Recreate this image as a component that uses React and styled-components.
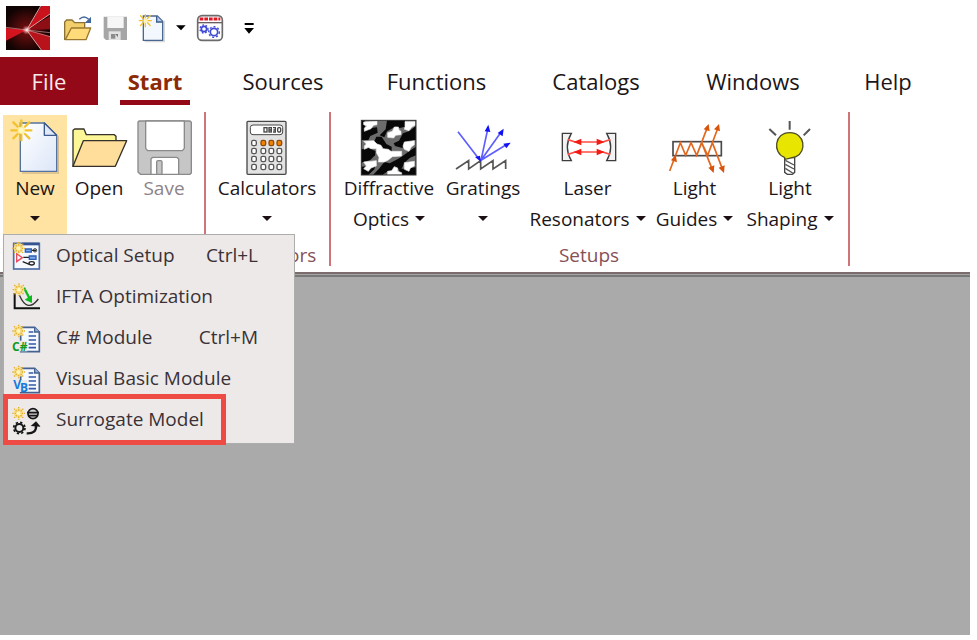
import React from "react";
import styled, { createGlobalStyle, css } from "styled-components";

const Global = createGlobalStyle`
  * { box-sizing: border-box; }
  body { margin: 0; background: #fff; }
  button { font: inherit; color: inherit; background: none; border: 0; padding: 0; margin: 0; }
`;

const Page = styled.div`
  display: flex;
  flex-direction: column;
  min-height: 100vh;
  padding: 0 7px 5px 0;
  font-family: "Open Sans", "Noto Sans", sans-serif;
  font-size: 19px;
  color: #1c1518;
`;

const QuickAccess = styled.header`
  display: flex;
  align-items: center;
  gap: 8px;
  height: 57px;
  padding: 0 0 1px 6px;
`;

const Logo = styled.svg`
  width: 44px;
  height: 44px;
  margin-right: 6px;
`;

const QuickButton = styled.button`
  display: flex;
  width: ${(p) => p.$w || 28}px;
  height: 28px;
  margin-left: ${(p) => (p.$apart ? 8 : 0)}px;
`;

const Glyph = styled.svg`
  display: block;
  flex: none;
  width: 100%;
  height: 100%;
  overflow: visible;
`;

const TabBar = styled.nav`
  display: flex;
  height: 48px;
  font-size: 22px;
`;

const Tab = styled.button`
  display: flex;
  justify-content: center;
  width: ${(p) => p.$w}px;
  line-height: 48px;
  white-space: nowrap;
  ${(p) => p.$file && css`background: #930918; color: #f6e9ea;`}
  ${(p) => p.$active && css`color: #8c2a06; font-weight: 700;`}
`;

const TabText = styled.span`
  height: 48px;
  padding: 0 8px;
  ${(p) => p.$active && css`border-bottom: 5px solid #930918;`}
`;

const Ribbon = styled.section`
  display: flex;
  padding: 7px 0 6px;
  border-bottom: 2px solid #7b6d6d;
`;

const Group = styled.div`
  display: flex;
  flex-direction: column;
  justify-content: space-between;
  min-height: 154px;
  padding: 3px ${(p) => p.$right || 0}px 0 ${(p) => p.$left || 0}px;
  border-right: 2px solid #cf7479;
`;

const GroupButtons = styled.div`
  display: flex;
`;

const GroupLabel = styled.div`
  text-align: center;
  line-height: 22px;
  color: #875055;
`;

const Anchor = styled.div`
  position: relative;
`;

const BigButton = styled.button`
  display: flex;
  flex-direction: column;
  align-items: center;
  justify-content: flex-start;
  width: ${(p) => p.$w}px;
  padding-top: 4px;
  line-height: 30px;
  white-space: nowrap;
  ${(p) => p.$open && css`background: #ffe3a2; height: 120px;`}
  &:disabled { color: #8e8388; }
`;

const BigIcon = styled.span`
  display: block;
  width: 56px;
  height: 53px;
`;

const IconSvg = styled.svg`
  display: block;
  width: 56px;
  height: 56px;
  overflow: visible;
`;

const Line = styled.span`
  display: flex;
  align-items: center;
  justify-content: center;
  gap: 6px;
  height: 31px;
`;

const Caret = styled.span`
  border: 5px solid transparent;
  border-top-color: #1c1014;
  border-bottom: 0;
`;

const Menu = styled.div`
  position: absolute;
  z-index: 2;
  top: 119px;
  left: 0;
  width: 292px;
  padding-bottom: 3px;
  background: #ede9e9;
  border: 1px solid #adadad;
`;

const MenuItem = styled.button`
  position: relative;
  display: flex;
  align-items: center;
  width: 100%;
  height: 41px;
  padding: 0 36px 2px 8px;
  text-align: left;
  white-space: nowrap;
  color: #3a3236;
`;

const MenuIcon = styled.svg`
  width: 28px;
  height: 28px;
  margin-right: 16px;
  overflow: visible;
`;

const Shortcut = styled.span`
  margin-left: auto;
`;

const Highlight = styled.span`
  position: absolute;
  top: -5px;
  left: -1px;
  width: 223px;
  height: 51px;
  border: 5px solid #ed4b44;
`;

const Workspace = styled.main`
  flex: 1;
  background: #aaa;
  border-top: 1px solid #a4a4a4;
  box-shadow: inset 0 2px #777;
`;

const Spark = ({ x, y, s = 1, color = "#f3c32e" }) => (
  <g transform={`translate(${x} ${y}) scale(${s})`} stroke={color} strokeWidth="7" strokeLinecap="round">
    <path d="M0-30V-13M0 13V30M-30 0H-13M13 0H30M-24-24L-11-11M24-24L11-11M-24 24L-11 11M24 24L11 11" />
    <circle r="10" fill="#fff7c2" stroke="#ffe98a" strokeWidth="3" />
  </g>
);

const SmallSpark = ({ x, y }) => (
  <g transform={`translate(${x} ${y})`}>
    <circle r="15" fill="#f8df8c" />
    <path d="M0-19V19M-19 0H19M-14-14L14 14M14-14L-14 14" stroke="#e2ad2b" strokeWidth="4" strokeDasharray="4 3" />
    <circle r="6" fill="#fff6c0" />
  </g>
);

const NewIcon = () => (
  <IconSvg viewBox="21 42 168 168" fill="none">
    <defs>
      <linearGradient id="paper" x1="0" y1="0" x2="1" y2="1">
        <stop offset="0" stopColor="#fff" />
        <stop offset="1" stopColor="#dce6f8" />
      </linearGradient>
    </defs>
    <path d="M66 204H175V94" stroke="#d5bd8b" strokeWidth="4" />
    <path d="M61 54H133L170 91V199H61Z" fill="url(#paper)" stroke="#54719f" strokeWidth="4" />
    <path d="M133 54V91H170Z" fill="#dfe9fa" stroke="#3c5a8c" strokeWidth="4" strokeLinejoin="round" />
    <Spark x={64} y={76} />
  </IconSvg>
);

const OpenIcon = () => (
  <IconSvg viewBox="213 42 168 168" stroke="#34322a" strokeWidth="4" strokeLinejoin="round">
    <path d="M219 184V76L224 72H252L259 89H343L348 94V108L300 170Z" fill="#fdf697" />
    <path d="M219 184L250 107H380L346 184Z" fill="#ffdd9b" />
  </IconSvg>
);

const SaveIcon = () => (
  <IconSvg viewBox="408 42 168 168" stroke="#8a8a8a" strokeWidth="4" strokeLinejoin="round">
    <path d="M417 48H570L574 52V204L570 208H421L414 201V51Z" fill="#c6c6c6" />
    <path d="M437 48H553V130L547 137H443L437 130Z" fill="#fff" />
    <path d="M453 208V162L458 157H530L536 162V208Z" fill="#fff" />
    <rect x="470" y="167" width="16" height="41" rx="4" fill="#c6c6c6" />
  </IconSvg>
);

const CalculatorIcon = () => (
  <IconSvg viewBox="103 42 168 168" stroke="#484848" strokeWidth="4">
    <rect x="127" y="49" width="117" height="159" rx="3" fill="#e2e2e2" />
    <rect x="137" y="60" width="97" height="29" rx="8" fill="#fff" strokeWidth="3" />
    <g fill="none" strokeWidth="4">
      <rect x="178" y="68" width="9" height="13" />
      <rect x="193" y="68" width="7" height="13" />
      <path d="M193 75H200M205 68H212V81H205M206 75H212" />
      <rect x="219" y="68" width="9" height="13" rx="3" />
    </g>
    {[114, 138, 162, 186].map((y, r) =>
      [148, 176, 200, 224].map((x, c) => (
        <rect key={x + "-" + y} x={x - 7} y={y - 8} width="14" height="16" rx="5" strokeWidth="4"
          fill={r === 0 && c > 0 ? "#ef8200" : "#fff"} stroke={r === 0 && c > 0 ? "#8a4a10" : "#555"} />
      ))
    )}
  </IconSvg>
);

const DiffractiveIcon = () => (
  <IconSvg viewBox="6 3 168 168">
    <rect x="7" y="7" width="164" height="164" fill="#6c6c6c" />
    <g fill="#080808">
      <path d="M7 7H18V32L54 28L56 44L34 54L28 66H7Z" />
      <path d="M84 7H138V26L122 30L108 26L84 40L76 58L62 52L80 34Z" />
      <path d="M52 56H68L82 78L98 86V102H86L62 96L44 74Z" />
      <path d="M171 24V66L140 72L130 90L108 84L104 76L120 68L132 46L150 40Z" />
      <path d="M7 94L30 90L50 100L48 112L34 126L7 134Z" />
      <path d="M171 86V112L152 120L136 134L128 152L86 160L70 171H42L60 152L76 132L92 136L118 122L134 112L150 100Z" />
      <path d="M7 146L50 142L46 154L28 171H7Z" />
      <path d="M120 152H136L171 148V171H122Z" />
    </g>
    <g fill="#fff" stroke="#e8e8e8" strokeWidth="2" strokeLinejoin="round">
      <path d="M14 12L54 10V20L44 22L36 32L16 40V30L24 24L14 20Z" />
      <path d="M106 27H118L120 36L126 40V50L110 52L104 60L86 58V44L100 40Z" />
      <path d="M138 11H168V22L158 28L150 38L136 34L138 26Z" />
      <path d="M14 70L44 68L54 78L66 82L72 92L88 94L96 100H128V114L100 116L88 126L76 132H58L60 118L52 104V92H36L28 88L16 94V84L22 78Z" />
      <path d="M136 72L166 68V80L156 88L150 100L136 94L132 84Z" />
      <path d="M14 132L52 128V144L36 150L28 160L14 152L22 144Z" />
      <path d="M136 134L166 130V144L154 150L150 160L136 154Z" />
      <path d="M106 146L116 150V160L128 164V170H86V160L98 158Z" />
    </g>
    <rect x="7" y="7" width="164" height="164" fill="none" stroke="#333" strokeWidth="3" />
  </IconSvg>
);

const GratingsIcon = () => (
  <IconSvg viewBox="63 42 168 168" fill="none">
    <path d="M66 192L104 167V192L140 167V192L177 167V192L215 167V192" stroke="#555" strokeWidth="5" />
    <path d="M72 80L139 167M141 166L161 73M141 166L201 82M141 166L219 118" stroke="#5e5eff" strokeWidth="5" />
    <g fill="#1212f0">
      <path d="M141 170L123 156L138 152Z" />
      <path d="M163 59L169 81L152 79Z" />
      <path d="M209 71L206 94L191 84Z" />
      <path d="M230 113L217 130L208 116Z" />
    </g>
  </IconSvg>
);

const LaserIcon = () => (
  <IconSvg viewBox="376 42 168 168" fill="none" strokeWidth="4">
    <path d="M410 85H383V167H410Q386 126 410 85Z" fill="#f2f2f2" stroke="#3d3d3d" />
    <path d="M516 85H543V167H516Q540 126 516 85Z" fill="#f2f2f2" stroke="#3d3d3d" />
    <path d="M399 104L422 111H504L527 104M399 148L422 141H504L527 148" stroke="#ff4c44" strokeWidth="5" />
    <g fill="#f21c14">
      <path d="M416 111L440 101V121ZM510 111L486 101V121ZM416 141L440 131V151ZM510 141L486 131V151Z" />
    </g>
  </IconSvg>
);

const GuidesIcon = () => (
  <IconSvg viewBox="68 42 168 168" fill="none">
    <rect x="86" y="110" width="145" height="42" stroke="#4a4a4a" strokeWidth="5" />
    <path d="M76 198L108 113L124 151L140 113L157 151L190 65M157 151L172 113M172 113L204 194M172 113L190 151L222 65M204 113L235 194" stroke="#e3681e" strokeWidth="5" />
    <g fill="#d9540b">
      <path d="M94 149L98 172L80 166Z" />
      <path d="M193 57L196 79L178 73ZM224 57L227 79L209 73Z" />
      <path d="M208 204L210 181L192 188ZM239 204L241 181L223 188Z" />
    </g>
  </IconSvg>
);

const BulbIcon = () => (
  <IconSvg viewBox="354 42 168 168" fill="none">
    <path d="M437 48V74M376 72L396 91M498 72L479 91" stroke="#555" strokeWidth="6" />
    <path d="M422 158V202L430 208H445L452 202V158Z" fill="#fff" stroke="#454545" strokeWidth="4" />
    <path d="M424 166L450 180M424 178L450 192M424 190L446 204" stroke="#555" strokeWidth="4" />
    <path d="M424 163L421 157C385 143 391 83 437 83C483 83 489 139 456 155Z" fill="#e8e600" stroke="#4d4d27" strokeWidth="4" />
  </IconSvg>
);

const DocLines = ({ x, y }) => (
  <g>
    <path d={`M${x} ${y}H${x + 42}L${x + 56} ${y + 14}V${y + 73}H${x}Z`} fill="#f4f8ff" stroke="#44618f" strokeWidth="5" />
    <path d={`M${x + 42} ${y}V${y + 14}H${x + 56}`} fill="#9db4d8" stroke="#44618f" strokeWidth="4" />
    <path d={`M${x + 24} ${y + 14}H${x + 38}M${x + 24} ${y + 26}H${x + 46}M${x + 24} ${y + 38}H${x + 46}M${x + 24} ${y + 50}H${x + 46}M${x + 24} ${y + 61}H${x + 46}`} stroke="#3558a5" strokeWidth="5" />
  </g>
);

const CodeText = styled.text`
  font-family: "Open Sans", sans-serif;
  font-weight: 700;
  font-size: 36px;
`;

const setupIcon = (
  <MenuIcon viewBox="36 36 84 84" fill="none">
    <rect x="41" y="43" width="77" height="77" fill="#f5f9ff" stroke="#4d6ea6" strokeWidth="5" />
    <path d="M66 45H118" stroke="#35548f" strokeWidth="8" />
    <path d="M50 74V98L67 86Z" stroke="#ee4a5a" strokeWidth="4" />
    <path d="M70 85H88M94 64H108M68 98L88 106" stroke="#222" strokeWidth="4" />
    <path d="M76 60H94V69H76ZM88 81H108V91H88Z" fill="#7ca9ed" stroke="#2e5eb0" strokeWidth="4" />
    <circle cx="105" cy="64" r="5" stroke="#333" strokeWidth="3" />
    <ellipse cx="95" cy="103" rx="8" ry="5" stroke="#222" strokeWidth="4" />
    <SmallSpark x={56} y={58} />
  </MenuIcon>
);

const iftaIcon = (
  <MenuIcon viewBox="36 159 84 84" fill="none">
    <path d="M44 192V238H120" stroke="#111" strokeWidth="6" />
    <path d="M58 198Q82 254 115 210" stroke="#333" strokeWidth="4" />
    <path d="M72 176L88 207" stroke="#0aba1e" strokeWidth="7" />
    <path d="M96 222L74 212L96 198Z" fill="#0aba1e" />
    <SmallSpark x={57} y={182} />
  </MenuIcon>
);

const csharpIcon = (
  <MenuIcon viewBox="36 11 84 84" fill="none">
    <DocLines x={62} y={24} />
    <rect x="38" y="64" width="44" height="32" fill="#ede9e9" />
    <CodeText x="36" y="94" fill="#109a1c">C#</CodeText>
    <SmallSpark x={56} y={35} />
  </MenuIcon>
);

const basicIcon = (
  <MenuIcon viewBox="36 134 84 84" fill="none">
    <DocLines x={62} y={147} />
    <rect x="40" y="182" width="42" height="36" fill="#ede9e9" />
    <CodeText x="40" y="208" fill="#1879dd">V</CodeText>
    <CodeText x="60" y="219" fill="#1879dd">B</CodeText>
    <SmallSpark x={56} y={158} />
  </MenuIcon>
);

const surrogateIcon = (
  <MenuIcon viewBox="36 257 84 84" fill="none" stroke="#171717">
    <circle cx="99" cy="283" r="15" strokeWidth="5" fill="#d9d6d6" />
    <path d="M81 280H117M86 289H112" strokeWidth="5" />
    <circle cx="58" cy="326" r="17" strokeWidth="5" strokeDasharray="7 6.4" />
    <circle cx="58" cy="326" r="12" strokeWidth="6" />
    <path d="M80 342Q110 344 108 318" strokeWidth="7" />
    <path d="M92 320L108 306L122 322Z" fill="#171717" stroke="none" />
    <g stroke="none"><SmallSpark x={56} y={282} /></g>
  </MenuIcon>
);

const menu = [
  { icon: setupIcon, label: "Optical Setup", keys: "Ctrl+L" },
  { icon: iftaIcon, label: "IFTA Optimization" },
  { icon: csharpIcon, label: "C# Module", keys: "Ctrl+M" },
  { icon: basicIcon, label: "Visual Basic Module" },
  { icon: surrogateIcon, label: "Surrogate Model", marked: true },
];

const tabs = [
  { label: "File", w: 98, file: true },
  { label: "Start", w: 114, active: true },
  { label: "Sources", w: 142 },
  { label: "Functions", w: 165 },
  { label: "Catalogs", w: 154 },
  { label: "Windows", w: 160 },
  { label: "Help", w: 110 },
];

const setups = [
  { Icon: DiffractiveIcon, w: 102, first: "Diffractive", second: "Optics" },
  { Icon: GratingsIcon, w: 86, first: "Gratings" },
  { Icon: LaserIcon, w: 123, first: "Laser", second: "Resonators" },
  { Icon: GuidesIcon, w: 91, first: "Light", second: "Guides" },
  { Icon: BulbIcon, w: 100, first: "Light", second: "Shaping" },
];

const Command = ({ Icon, w, first, second, drop = true, ...rest }) => (
  <BigButton $w={w} {...rest}>
    <BigIcon><Icon /></BigIcon>
    <Line>{first}</Line>
    {drop && <Line>{second}<Caret /></Line>}
  </BigButton>
);

export default function App() {
  return (
    <Page>
      <Global />
      <QuickAccess>
        <Logo viewBox="18 18 132 132" fill="none">
          <defs>
            <radialGradient id="ember" gradientUnits="userSpaceOnUse" cx="80" cy="90" r="70">
              <stop offset="0" stopColor="#7a1010" />
              <stop offset="1" stopColor="#100303" />
            </radialGradient>
            <radialGradient id="flare">
              <stop offset="0" stopColor="#fff" />
              <stop offset="1" stopColor="#ff9a9a" stopOpacity="0" />
            </radialGradient>
          </defs>
          <rect x="18" y="18" width="132" height="132" fill="url(#ember)" />
          <path d="M80 90L124 18H150V42Z" fill="#c9121b" />
          <path d="M80 90L150 48V88Z" fill="#8d0f15" />
          <path d="M80 90L18 84V122Z" fill="#d3141e" />
          <path d="M80 90L150 108V150H124Z" fill="#b8121b" />
          <path d="M80 90L122 18M80 90L150 42M80 90L124 150" stroke="#dba0a1" strokeWidth="3" />
          <path d="M80 90L150 98M80 90L150 110M80 90L18 82" stroke="#c99a9a" strokeWidth="2" />
          <circle cx="80" cy="90" r="14" fill="url(#flare)" />
        </Logo>
        <QuickButton aria-label="Open">
          <Glyph viewBox="192 42 84 84" fill="none">
            <path d="M194 118V66L200 60H216L224 68H254V84L230 118Z" fill="#f3cf6b" stroke="#8d7134" strokeWidth="4" />
            <path d="M196 119L214 84H272L258 119Z" fill="#ffdc79" stroke="#9a7832" strokeWidth="4" strokeLinejoin="round" />
            <path d="M238 58Q252 44 266 58" stroke="#42679c" strokeWidth="4" />
            <path d="M273 50V69H254Z" fill="#42679c" />
          </Glyph>
        </QuickButton>
        <QuickButton aria-label="Save">
          <Glyph viewBox="300 42 84 84">
            <path d="M311 50H381V120H318L311 113Z" fill="#a6a6a6" />
            <path d="M322 50H371V84H322Z" fill="#f6f6f6" />
            <path d="M326 94H362V120H326Z" fill="#e2e2e2" />
            <path d="M333 102H346V116H333Z" fill="#8c8c8c" />
            <path d="M346 102H354V112Z" fill="#777" />
          </Glyph>
        </QuickButton>
        <QuickButton aria-label="New">
          <Glyph viewBox="408 42 84 84" fill="none">
            <path d="M434 125H493V62" stroke="#d8d8d8" strokeWidth="4" />
            <path d="M430 48H472L488 64V121H430Z" fill="#f3f8ff" stroke="#4a6693" strokeWidth="4" />
            <path d="M470 48V66H488" fill="#b7cbea" stroke="#3d5b8d" strokeWidth="4" />
            <Spark x={436} y={62} s={0.6} />
          </Glyph>
        </QuickButton>
        <QuickButton $w={16} aria-label="More new items">
          <Glyph viewBox="516 42 48 84"><path d="M528 76H557L543 91Z" /></Glyph>
        </QuickButton>
        <QuickButton aria-label="Scheduled calculations">
          <Glyph viewBox="588 42 84 84" fill="none">
            <rect x="593" y="47" width="74" height="74" rx="13" fill="#fff" stroke="#6b6b6b" strokeWidth="5" />
            <path d="M599 57H661" stroke="#e01824" strokeWidth="9" strokeDasharray="11 3" />
            <path d="M594 68H666" stroke="#6a5f5f" strokeWidth="4" />
            <circle cx="612" cy="87" r="8" stroke="#3f4ad2" strokeWidth="5" />
            <circle cx="612" cy="87" r="12" stroke="#3f4ad2" strokeWidth="4" strokeDasharray="5 5" />
            <circle cx="642" cy="96" r="11" stroke="#3f4ad2" strokeWidth="5" />
            <circle cx="642" cy="96" r="16" stroke="#3f4ad2" strokeWidth="4" strokeDasharray="6 6" />
          </Glyph>
        </QuickButton>
        <QuickButton $w={18} $apart aria-label="Customize toolbar">
          <Glyph viewBox="720 42 54 84"><path d="M734 69H761V75H734ZM733 84H762L747 101Z" /></Glyph>
        </QuickButton>
      </QuickAccess>

      <TabBar>
        {tabs.map((t) => (
          <Tab key={t.label} $w={t.w} $file={t.file} $active={t.active}>
            <TabText $active={t.active}>{t.label}</TabText>
          </Tab>
        ))}
      </TabBar>

      <Ribbon>
        <Group $left={3} $right={7}>
          <GroupButtons>
            <Anchor>
              <Command Icon={NewIcon} w={64} first="New" $open aria-haspopup="menu" aria-expanded="true" />
              <Menu role="menu">
                {menu.map((m) => (
                  <MenuItem key={m.label} role="menuitem">
                    {m.icon}
                    {m.label}
                    {m.keys && <Shortcut>{m.keys}</Shortcut>}
                    {m.marked && <Highlight />}
                  </MenuItem>
                ))}
              </Menu>
            </Anchor>
            <Command Icon={OpenIcon} w={64} first="Open" drop={false} />
            <Command Icon={SaveIcon} w={66} first="Save" drop={false} disabled />
          </GroupButtons>
        </Group>
        <Group $left={7} $right={8}>
          <GroupButtons>
            <Command Icon={CalculatorIcon} w={108} first="Calculators" />
          </GroupButtons>
          <GroupLabel>Calculators</GroupLabel>
        </Group>
        <Group $left={7} $right={8}>
          <GroupButtons>
            {setups.map((s) => (
              <Command key={s.first + s.second} {...s} />
            ))}
          </GroupButtons>
          <GroupLabel>Setups</GroupLabel>
        </Group>
      </Ribbon>
      <Workspace />
    </Page>
  );
}
